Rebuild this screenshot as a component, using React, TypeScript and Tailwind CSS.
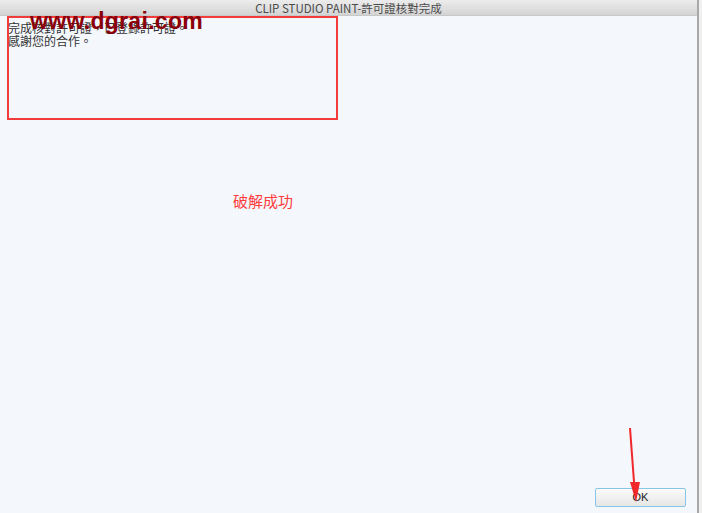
import React from "react"

const cjk = '"Noto Sans CJK TC", "Liberation Sans", sans-serif'

function TitleBar() {
  return (
    <div className="h-[16px] shrink-0 flex items-center justify-center bg-gradient-to-b from-[#ececec] to-[#d4d4d4] border-b border-[#c8c8c8]">
      <span
        className="text-[11.5px] leading-[14px] text-[#4a4a4a]"
        style={{ fontFamily: cjk }}
      >
        CLIP STUDIO PAINT-許可證核對完成
      </span>
    </div>
  )
}

function Arrow() {
  // hand-drawn red pointer toward the OK button
  return (
    <svg
      className="absolute left-[620px] top-[426px] pointer-events-none"
      width="30"
      height="80"
      viewBox="0 0 30 80"
    >
      <polygon points="9,2 11,2 15,56 20,56 16,76 10,56 13,56" fill="#f0282c" />
    </svg>
  )
}

export default function App() {
  return (
    <div className="w-[702px] h-[513px] flex bg-[#f2f2f2] overflow-hidden">
      <div className="relative w-[697px] h-full flex flex-col bg-[#f4f7fc]">
        <TitleBar />

        <div
          className="pl-[8px] pt-[5px] text-[12px] leading-[13px] text-[#333]"
          style={{ fontFamily: cjk }}
        >
          <p>完成核對許可證，已登錄許可證。</p>
          <p>感謝您的合作。</p>
        </div>

        <div className="flex-1 flex flex-col">
          <p
            className="mt-[146px] ml-[233px] text-[15px] leading-none text-[#ff3c3c]"
            style={{ fontFamily: cjk }}
          >
            破解成功
          </p>

          <button
            className="mt-auto self-end mr-[11px] mb-[6px] w-[91px] h-[19px] border border-[#86c6e6] rounded-[2px] bg-gradient-to-b from-[#fbfbfb] to-[#e6e6e6] text-[11px] leading-none text-[#222]"
            style={{ fontFamily: '"Liberation Sans", sans-serif' }}
          >
            OK
          </button>
        </div>

        {/* highlight box and watermark sit over the message text */}
        <div className="absolute left-[7px] top-[16px] w-[331px] h-[104px] border-2 border-[#f23c3c] pointer-events-none" />
        <span
          className="absolute left-[30px] top-[10px] text-[23px] font-bold leading-none text-[#8a0008] tracking-[0.3px]"
          style={{ fontFamily: '"Liberation Sans", sans-serif' }}
        >
          www.dgrai.com
        </span>
        <Arrow />
      </div>
      <div className="w-[2px] h-full bg-[#a8a8a8]" />
      <div className="flex-1 bg-[#f0f0f0]" />
    </div>
  )
}
